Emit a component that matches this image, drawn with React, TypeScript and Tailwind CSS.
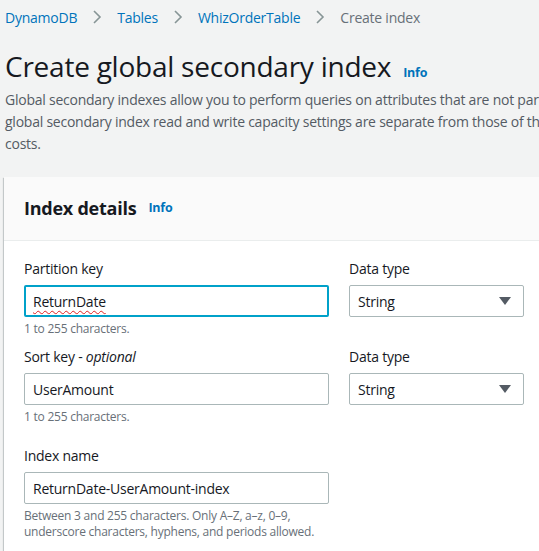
const link = "text-[#0073bb]";

function Chevron() {
  return (
    <svg width="10" height="16" viewBox="0 0 10 16" className="mx-[15px]">
      <path d="M2 2l6 6-6 6" fill="none" stroke="#879596" strokeWidth="1.6" />
    </svg>
  );
}

function Caret() {
  return (
    <svg width="12" height="10" viewBox="0 0 12 10">
      <path d="M0 1h12L6 9z" fill="#545b64" />
    </svg>
  );
}

function TextField({ value, focused, spell }: { value: string; focused?: boolean; spell?: boolean }) {
  return (
    <div
      className={
        "h-[32px] w-[305px] rounded-[2px] bg-white flex items-center text-[14px] text-[#16191f] " +
        (focused ? "border-[2px] border-[#00a1c9] px-[7px]" : "border border-[#aab7b8] px-[8px]")
      }
    >
      <span className={spell ? "underline decoration-wavy decoration-[#e02020] decoration-[1px] underline-offset-[3px]" : ""}>
        {value}
      </span>
    </div>
  );
}

function SelectField() {
  return (
    <div className="h-[32px] w-[175px] rounded-[2px] border border-[#aab7b8] bg-white pl-[8px] pr-[12px] flex items-center justify-between text-[14px] text-[#16191f]">
      <span>String</span>
      <Caret />
    </div>
  );
}

function Label({ children }: { children: React.ReactNode }) {
  return <div className="text-[14px] leading-[20px] text-[#16191f] mb-[6px]">{children}</div>;
}

function Hint({ children }: { children: React.ReactNode }) {
  return <div className="text-[12px] leading-[16px] text-[#687078] mt-[4px]">{children}</div>;
}

export default function App() {
  return (
    <div className="h-[551px] w-full overflow-hidden bg-[#f2f3f3] font-['Open_Sans',sans-serif] tracking-[-0.015em]">
      <div className="w-[820px] pl-[5px]">
        {/* Breadcrumbs */}
        <nav className="flex items-center h-[34px] text-[14px]">
          <span className={link}>DynamoDB</span>
          <Chevron />
          <span className={link}>Tables</span>
          <Chevron />
          <span className={link}>WhizOrderTable</span>
          <Chevron />
          <span className="text-[#687078]">Create index</span>
        </nav>

        {/* Header */}
        <div className="flex items-baseline mt-[12px]">
          <h1 className="text-[28px] leading-[40px] text-[#16191f]">Create global secondary index</h1>
          <span className={"ml-[12px] text-[12.5px] font-bold " + link}>Info</span>
        </div>
        <p className="text-[14px] leading-[22px] text-[#545b64] whitespace-nowrap mt-[3px]">
          Global secondary indexes allow you to perform queries on attributes that are not part of the table's primary key. The
          <br />
          global secondary index read and write capacity settings are separate from those of the base table and incur additional
          <br />
          costs.
        </p>

        {/* Card */}
        <div className="mt-[22px] -ml-[1px] bg-white shadow-[0_1px_1px_0_rgba(0,28,36,0.3),1px_1px_1px_0_rgba(0,28,36,0.15),-1px_1px_1px_0_rgba(0,28,36,0.15)]">
          <div className="h-[64px] bg-[#fafafa] border-b border-[#eaeded] flex items-center px-[20px]">
            <h2 className="text-[18px] font-bold text-[#16191f]">Index details</h2>
            <span className={"ml-[12px] text-[12.5px] font-bold " + link}>Info</span>
          </div>

          <div className="px-[20px] pt-[18px] pb-[20px]">
            <div className="flex gap-[20px]">
              <div>
                <Label>Partition key</Label>
                <TextField value="ReturnDate" focused spell />
                <Hint>1 to 255 characters.</Hint>
              </div>
              <div>
                <Label>Data type</Label>
                <SelectField />
              </div>
            </div>

            <div className="flex gap-[20px] mt-[10px]">
              <div>
                <Label>
                  Sort key - <i>optional</i>
                </Label>
                <TextField value="UserAmount" />
                <Hint>1 to 255 characters.</Hint>
              </div>
              <div>
                <Label>Data type</Label>
                <SelectField />
              </div>
            </div>

            <div className="mt-[21px]">
              <Label>Index name</Label>
              <TextField value="ReturnDate-UserAmount-index" />
              <Hint>
                Between 3 and 255 characters. Only A–Z, a–z, 0–9,
                <br />
                underscore characters, hyphens, and periods allowed.
              </Hint>
            </div>
          </div>
        </div>
      </div>
    </div>
  );
}
